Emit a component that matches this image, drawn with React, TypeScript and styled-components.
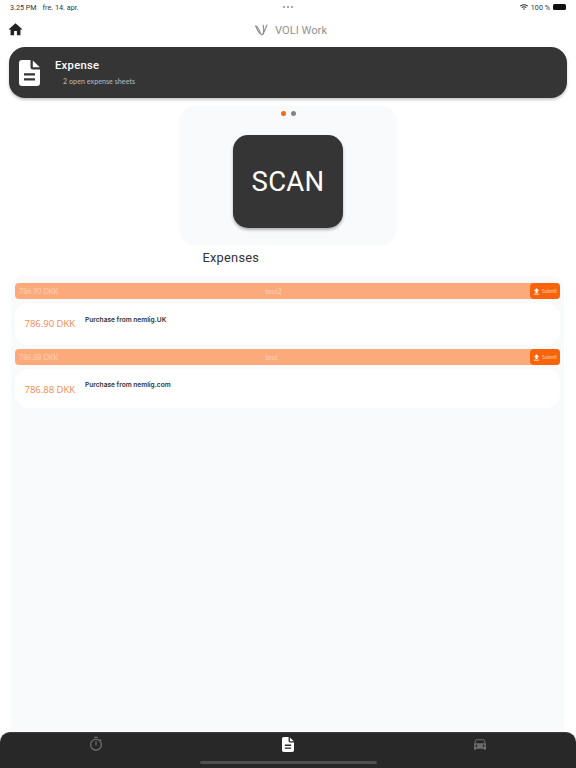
import React from "react";
import styled, { createGlobalStyle } from "styled-components";
import { FaWifi } from "react-icons/fa";
import { MdHome, MdFileUpload, MdOutlineTimer, MdDirectionsCar } from "react-icons/md";

const Global = createGlobalStyle`
  html, body { margin: 0; padding: 0; background: #fff; }
  * { box-sizing: border-box; }
`;

const Page = styled.div`
  width: 576px;
  height: 768px;
  display: flex;
  flex-direction: column;
  overflow: hidden;
  background: #fff;
  font-family: Roboto, "Liberation Sans", sans-serif;
`;

const StatusBar = styled.div`
  height: 13px;
  padding: 1px 10px 0 10px;
  display: grid;
  grid-template-columns: 1fr auto 1fr;
  align-items: center;
  font-size: 7.2px;
  color: #333;
`;

const StatusLeft = styled.div`
  display: flex;
  gap: 6px;
`;

const Dots = styled.div`
  display: flex;
  gap: 2px;
`;

const Dot = styled.span`
  width: 2px;
  height: 2px;
  border-radius: 50%;
  background: #888;
`;

const StatusRight = styled.div`
  display: flex;
  justify-content: flex-end;
  align-items: center;
  gap: 3px;
`;

const Battery = styled.span`
  width: 13px;
  height: 6px;
  border-radius: 1.5px;
  background: #111;
`;

const Header = styled.header`
  height: 34px;
  padding-left: 7px;
  display: grid;
  grid-template-columns: 1fr auto 1fr;
  align-items: center;
  color: #222;
`;

const HomeSlot = styled.div`
  display: flex;
  font-size: 17px;
  margin-top: -1px;
`;

const Brand = styled.div`
  display: flex;
  align-items: center;
  gap: 7px;
  font-size: 11.2px;
  color: #929292;
  margin-left: -1px;
`;

const Banner = styled.section`
  height: 51px;
  margin: 0 9px;
  padding: 0 0 0 10px;
  display: flex;
  align-items: center;
  gap: 15px;
  flex: none;
  background: #353535;
  border-radius: 16px;
  box-shadow: 0 2px 3px rgba(0, 0, 0, 0.22);
  color: #fff;
`;

const BannerIcon = styled.div`
  display: flex;
  width: 21px;
  height: 26px;
`;

const BannerText = styled.div`
  display: flex;
  flex-direction: column;
  gap: 5px;
  margin-top: 0;
`;

const BannerTitle = styled.div`
  font-size: 11.2px;
  font-weight: 500;
  letter-spacing: 0.3px;
`;

const BannerSub = styled.div`
  font-family: Lato, sans-serif;
  font-size: 7.1px;
  letter-spacing: 0.05px;
  color: #bdbdbd;
  padding-left: 8px;
`;

const Carousel = styled.section`
  width: 218px;
  height: 139px;
  margin: 8px auto 0 179px;
  padding-top: 5px;
  flex: none;
  display: flex;
  flex-direction: column;
  align-items: center;
  background: #f8fafb;
  border-radius: 16px;
`;

const Pager = styled.div`
  display: flex;
  gap: 5px;
  height: 5px;
`;

const PagerDot = styled.span<{ $active?: boolean }>`
  width: 5px;
  height: 5px;
  border-radius: 50%;
  background: ${(p) => (p.$active ? "#f26a1b" : "#808488")};
`;

const ScanButton = styled.button`
  width: 110px;
  height: 93px;
  margin-top: 19px;
  border: 0;
  border-radius: 15px;
  background: #353535;
  color: #fff;
  font-family: Roboto, sans-serif;
  font-size: 27.5px;
  letter-spacing: 0.3px;
  box-shadow: 0 2px 3px rgba(0, 0, 0, 0.3);
`;

const SectionTitle = styled.h2`
  margin: 5px 0 0 202.5px;
  height: 26px;
  flex: none;
  font-size: 12.8px;
  line-height: 16px;
  font-weight: 400;
  letter-spacing: 0.25px;
  color: #333;
`;

const ListPanel = styled.main`
  flex: 1;
  margin: 0 12px 0 11px;
  padding: 7px 4px 0;
  display: flex;
  flex-direction: column;
  gap: 4px;
  background: #f8fafb;
  border-radius: 12px 12px 0 0;
`;

const Expense = styled.article`
  display: flex;
  flex-direction: column;
`;

const SheetBar = styled.div`
  height: 16px;
  display: grid;
  grid-template-columns: 1fr 1fr auto;
  align-items: center;
  background: #fcaa7b;
  border-radius: 4px;
  color: #fcd0b6;
  font-family: Lato, sans-serif;
  font-size: 7.2px;
  padding-left: 4px;
`;

const SheetName = styled.span`
  margin-left: -9px;
`;

const SubmitButton = styled.button`
  width: 30px;
  height: 16px;
  padding: 0 0 0 2px;
  border: 0;
  border-radius: 4px;
  display: flex;
  align-items: center;
  gap: 1px;
  background: #f9640b;
  color: #fbd5bd;
  font-family: Lato, sans-serif;
  font-size: 4.8px;
  white-space: nowrap;
  svg {
    font-size: 9px;
    color: #fff;
    flex: none;
  }
`;

const ExpenseCard = styled.div<{ $height: number }>`
  height: ${(p) => p.$height}px;
  margin-top: 4px;
  display: grid;
  grid-template-columns: 70px 1fr;
  background: #fff;
  border-radius: 14px;
`;

const Amount = styled.div<{ $top: number }>`
  padding: ${(p) => p.$top}px 0 0 9.5px;
  font-family: "Open Sans", sans-serif;
  font-size: 9.5px;
  line-height: 12px;
  color: #f28a4e;
`;

const Description = styled.div<{ $top: number }>`
  padding-top: ${(p) => p.$top}px;
  font-family: Inter, sans-serif;
  font-size: 6.6px;
  line-height: 9px;
  font-weight: 600;
  color: #333;
`;

const TabBar = styled.nav`
  height: 36px;
  flex: none;
  position: relative;
  display: grid;
  grid-template-columns: repeat(3, 1fr);
  padding: 3px 0 0;
  background: #282828;
  border-radius: 10px 10px 0 0;
  border-top: 1px solid #3c3c3c;
`;

const Tab = styled.div<{ $active?: boolean }>`
  display: flex;
  justify-content: center;
  align-items: center;
  font-size: 16px;
  height: 16px;
  color: ${(p) => (p.$active ? "#ffffff" : "#6b6b6b")};
`;

const VoliLogo = () => (
  <svg width="13" height="12" viewBox="0 0 13 12" fill="none" stroke="#8f8f8f" strokeWidth="1.2" strokeLinejoin="round" strokeLinecap="round">
    <path d="M0.8 2 C2.8 2 4.2 6 5.6 9.6 C6.3 11.4 7.6 11.2 8.2 9.8 L12 1" />
    <path d="M0.8 2 C2 5 3.5 9 5.6 9.6 M8.2 9.8 C9 7 8.8 4 8.2 1" />
  </svg>
);

const DocIcon = ({ width, height }: { width: number; height: number }) => (
  <svg width={width} height={height} viewBox="0 0 21 26" fill="currentColor">
    <path
      fillRule="evenodd"
      d="M3 0H11.5V7a2.5 2.5 0 0 0 2.5 2.5H21V23a3 3 0 0 1-3 3H3a3 3 0 0 1-3-3V3a3 3 0 0 1 3-3ZM5 13.2V15.6H16V13.2ZM5 18.2V20.6H16V18.2Z"
    />
    <path d="M13.8 0.6L20.8 7.2H13.8Z" />
  </svg>
);

const HomeIndicator = styled.div`
  position: absolute;
  left: 200px;
  bottom: 4px;
  width: 177px;
  height: 3px;
  border-radius: 2px;
  background: #505050;
`;

const expenses = [
  { total: "786.90 DKK", sheet: "test2", amount: "786.90 DKK", text: "Purchase from nemlig.UK", top: 15, descTop: 13, height: 42 },
  { total: "786.88 DKK", sheet: "test", amount: "786.88 DKK", text: "Purchase from nemlig.com", top: 15, descTop: 12, height: 39 },
];

export default function App() {
  return (
    <Page>
      <Global />
      <StatusBar>
        <StatusLeft>
          <span>3.25 PM</span>
          <span>fre. 14. apr.</span>
        </StatusLeft>
        <Dots>
          <Dot />
          <Dot />
          <Dot />
        </Dots>
        <StatusRight>
          <FaWifi size={8} />
          <span>100 %</span>
          <Battery />
        </StatusRight>
      </StatusBar>
      <Header>
        <HomeSlot>
          <MdHome />
        </HomeSlot>
        <Brand>
          <VoliLogo />
          <span>VOLI Work</span>
        </Brand>
        <span />
      </Header>
      <Banner>
        <BannerIcon>
          <DocIcon width={21} height={26} />
        </BannerIcon>
        <BannerText>
          <BannerTitle>Expense</BannerTitle>
          <BannerSub>2 open expense sheets</BannerSub>
        </BannerText>
      </Banner>
      <Carousel>
        <Pager>
          <PagerDot $active />
          <PagerDot />
        </Pager>
        <ScanButton>SCAN</ScanButton>
      </Carousel>
      <SectionTitle>Expenses</SectionTitle>
      <ListPanel>
        {expenses.map((e) => (
          <Expense key={e.text}>
            <SheetBar>
              <span>{e.total}</span>
              <SheetName>{e.sheet}</SheetName>
              <SubmitButton>
                <MdFileUpload />
                Submit
              </SubmitButton>
            </SheetBar>
            <ExpenseCard $height={e.height}>
              <Amount $top={e.top}>{e.amount}</Amount>
              <Description $top={e.descTop}>{e.text}</Description>
            </ExpenseCard>
          </Expense>
        ))}
      </ListPanel>
      <TabBar>
        <Tab>
          <MdOutlineTimer />
        </Tab>
        <Tab $active>
          <DocIcon width={12} height={15} />
        </Tab>
        <Tab>
          <MdDirectionsCar />
        </Tab>
        <HomeIndicator />
      </TabBar>
    </Page>
  );
}
